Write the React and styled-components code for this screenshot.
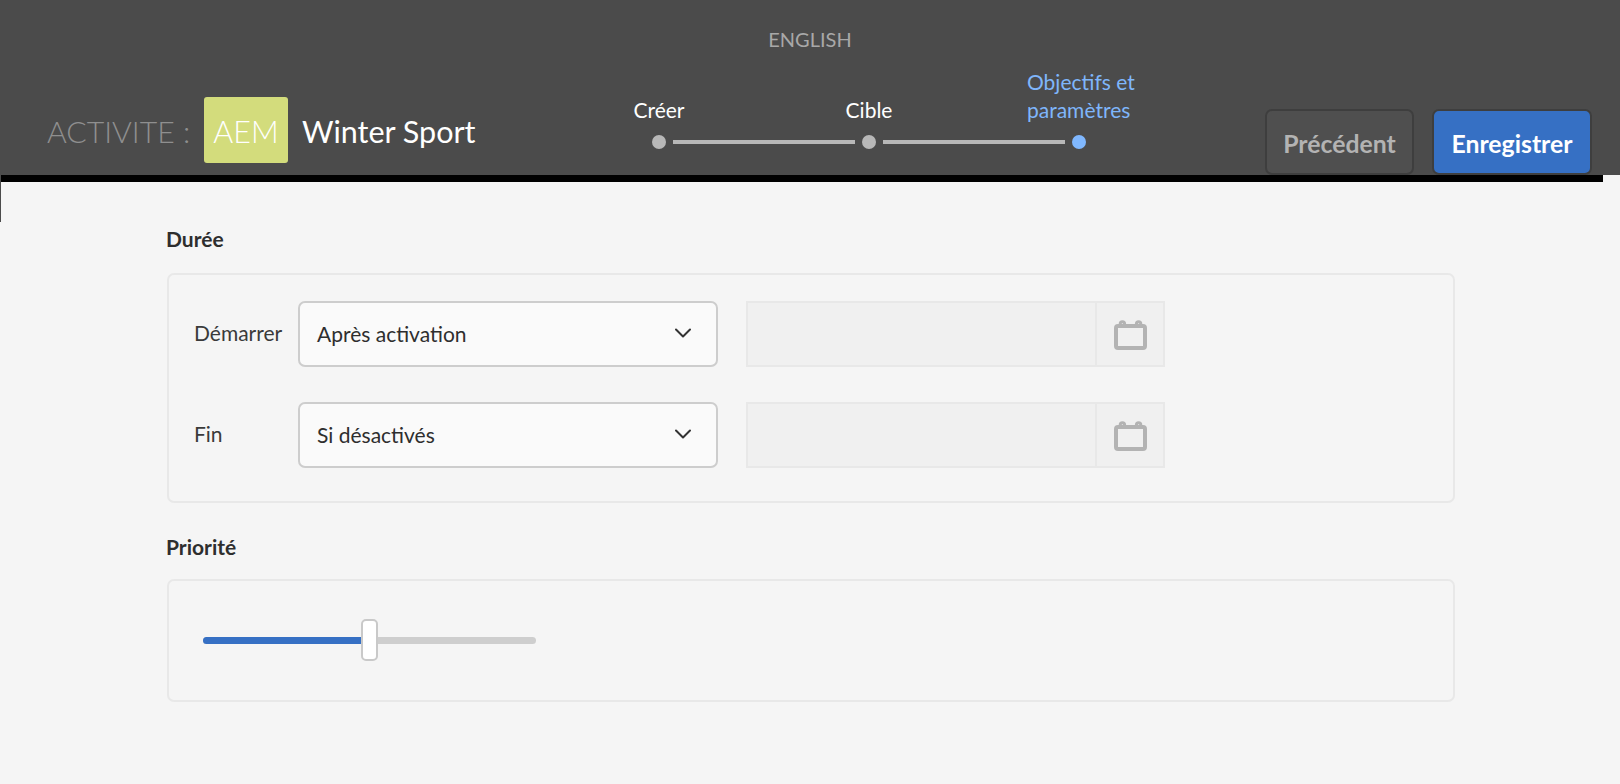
import React from "react";
import styled, { createGlobalStyle } from "styled-components";

const Global = createGlobalStyle`
  html, body { margin: 0; padding: 0; background: #f5f5f5; }
  body { font-family: "Lato", "Noto Sans", sans-serif; color: #2e2e2e; }
  * { box-sizing: border-box; }
`;

const Page = styled.div`
  position: relative;
  width: 1620px;
  height: 784px;
  overflow: hidden;
  background: #f5f5f5;
`;

const Header = styled.header`
  height: 175px;
  background: #4b4b4b;
`;

const LanguageRow = styled.div`
  height: 65px;
  padding-top: 26px;
  text-align: center;
  font-size: 20px;
  line-height: 26px;
  color: #a8a8a8;
`;

const MainRow = styled.div`
  display: flex;
  align-items: flex-start;
  padding: 0 28px 0 47px;
`;

const Title = styled.div`
  display: flex;
  align-items: center;
  width: 507px;
  margin-top: 32px;
  height: 66px;
`;

const ActivityLabel = styled.span`
  width: 157px;
  padding-top: 2px;
  font-size: 30.2px;
  font-weight: 300;
  color: #8f8f8f;
  white-space: nowrap;
`;

const Badge = styled.span`
  display: flex;
  align-items: center;
  justify-content: center;
  width: 84px;
  height: 66px;
  padding-top: 2px;
  border-radius: 3px;
  background: #d3dc7c;
  color: #fff;
  font-size: 30.5px;
  font-weight: 300;
`;

const ActivityName = styled.span`
  margin-left: 14px;
  padding-top: 2px;
  font-size: 30.5px;
  font-weight: 400;
  color: #fff;
  white-space: nowrap;
`;

const Stepper = styled.nav`
  width: 630px;
  margin-top: 3px;
`;

const StepLabels = styled.div`
  display: grid;
  grid-template-columns: repeat(3, 210px);
  align-items: end;
  justify-items: center;
  height: 56px;
  margin-bottom: 11px;
`;

const StepLabel = styled.span`
  width: ${(p) => (p.$active ? "106px" : "auto")};
  margin-left: ${(p) => (p.$active ? "2px" : "0")};
  font-size: 21px;
  line-height: 28px;
  white-space: nowrap;
  color: ${(p) => (p.$active ? "#7fb6fb" : "#fff")};
`;

const StepTrack = styled.div`
  display: flex;
  align-items: center;
  gap: 7px;
  width: 434px;
  margin-left: 98px;
`;

const StepDot = styled.span`
  flex: none;
  width: 14px;
  height: 14px;
  border-radius: 50%;
  background: ${(p) => (p.$active ? "#80b8ff" : "#b8b8b8")};
`;

const StepLine = styled.span`
  flex: 1;
  height: 4px;
  background: #b8b8b8;
`;

const Actions = styled.div`
  display: flex;
  gap: 18px;
  margin: 44px 0 0 auto;
`;

const ActionButton = styled.button`
  height: 66px;
  width: ${(p) => (p.$primary ? "160px" : "149px")};
  padding: 3px 0 0;
  border: 2px solid #3e3e3e;
  border-radius: 7px;
  background: ${(p) => (p.$primary ? "#3670c4" : "#4f4f4f")};
  color: ${(p) => (p.$primary ? "#fff" : "#b3b3b3")};
  font-family: inherit;
  font-size: 24.8px;
  font-weight: 700;
`;

const BlackBar = styled.div`
  width: 1602px;
  height: 7px;
  margin-left: 1px;
  background: #000;
`;

const EdgeSliver = styled.div`
  position: absolute;
  left: 0;
  top: 175px;
  width: 1px;
  height: 47px;
  background: #4b4b4b;
`;

const Main = styled.main`
  width: 1455px;
  padding: 45px 0 0 167px;
`;

const SectionTitle = styled.h2`
  margin: ${(p) => (p.$first ? "0 0 22px -1px" : "32px 0 20px -1px")};
  font-size: 21px;
  line-height: 24px;
  font-weight: 700;
  color: #2e2e2e;
`;

const Panel = styled.section`
  border: 2px solid #e8e8e8;
  border-radius: 7px;
`;

const DurationPanel = styled(Panel)`
  display: grid;
  gap: 35px;
  height: 230px;
  padding: 26px 25px 0;
  align-content: start;
`;

const FieldRow = styled.div`
  display: flex;
  align-items: center;
  height: 66px;
`;

const FieldLabel = styled.label`
  width: 104px;
  padding-bottom: 3px;
  font-size: 21px;
  color: #3a3a3a;
`;

const Select = styled.div`
  display: flex;
  align-items: center;
  justify-content: space-between;
  width: 420px;
  height: 66px;
  padding: 0 25px 2px 17px;
  border: 2px solid #cdcdcd;
  border-radius: 7px;
  background: #fafafa;
  font-size: 21px;
  color: #2e2e2e;
`;

const DateField = styled.div`
  display: flex;
  width: 419px;
  height: 66px;
  margin-left: 28px;
  border: 2px solid #e8e8e8;
  background: #f0f0f0;
`;

const DateInput = styled.div`
  flex: 1;
`;

const DateButton = styled.div`
  display: flex;
  align-items: center;
  justify-content: center;
  width: 68px;
  padding: 1px 0 0;
  border-left: 2px solid #e8e8e8;
`;

const PriorityPanel = styled(Panel)`
  height: 123px;
  padding: 38px 0 0 34px;
`;

const Slider = styled.div`
  position: relative;
  width: 333px;
  height: 42px;
  display: flex;
  align-items: center;
`;

const SliderTrack = styled.div`
  width: 100%;
  height: 7px;
  border-radius: 4px;
  background: #cecece;
  overflow: hidden;
`;

const SliderFill = styled.div`
  height: 100%;
  background: #3670c4;
`;

const SliderThumb = styled.div`
  position: absolute;
  top: 0;
  width: 17px;
  height: 42px;
  margin-left: -1px;
  border: 2px solid #c9c9c9;
  border-radius: 5px;
  background: #fff;
`;

const Chevron = () => (
  <svg width="16" height="10" viewBox="0 0 16 10" fill="none">
    <path d="M1 1.5l7 7 7-7" stroke="#333" strokeWidth="2" strokeLinecap="round" strokeLinejoin="round" />
  </svg>
);

const CalendarIcon = () => (
  <svg width="33" height="30" viewBox="0 0 33 30" fill="none">
    <rect x="2" y="6" width="29" height="22" rx="2" stroke="#b3b3b3" strokeWidth="4" />
    <path d="M6.2 6V4a2.2 2.2 0 0 1 4.4 0v2M22.4 6V4a2.2 2.2 0 0 1 4.4 0v2" stroke="#b3b3b3" strokeWidth="3" />
  </svg>
);

const DurationRow = ({ label, value }) => (
  <FieldRow>
    <FieldLabel>{label}</FieldLabel>
    <Select>
      {value}
      <Chevron />
    </Select>
    <DateField>
      <DateInput />
      <DateButton>
        <CalendarIcon />
      </DateButton>
    </DateField>
  </FieldRow>
);

export default function App() {
  const sliderPercent = 159 / 333;
  return (
    <Page>
      <Global />
      <Header>
        <LanguageRow>ENGLISH</LanguageRow>
        <MainRow>
          <Title>
            <ActivityLabel>ACTIVITE :</ActivityLabel>
            <Badge>AEM</Badge>
            <ActivityName>Winter Sport</ActivityName>
          </Title>
          <Stepper>
            <StepLabels>
              <StepLabel>Créer</StepLabel>
              <StepLabel>Cible</StepLabel>
              <StepLabel $active>
                Objectifs et
                <br />
                paramètres
              </StepLabel>
            </StepLabels>
            <StepTrack>
              <StepDot />
              <StepLine />
              <StepDot />
              <StepLine />
              <StepDot $active />
            </StepTrack>
          </Stepper>
          <Actions>
            <ActionButton>Précédent</ActionButton>
            <ActionButton $primary>Enregistrer</ActionButton>
          </Actions>
        </MainRow>
      </Header>
      <BlackBar />
      <EdgeSliver />
      <Main>
        <SectionTitle $first>Durée</SectionTitle>
        <DurationPanel>
          <DurationRow label="Démarrer" value="Après activation" />
          <DurationRow label="Fin" value="Si désactivés" />
        </DurationPanel>
        <SectionTitle>Priorité</SectionTitle>
        <PriorityPanel>
          <Slider>
            <SliderTrack>
              <SliderFill style={{ width: `${sliderPercent * 100}%` }} />
            </SliderTrack>
            <SliderThumb style={{ left: `${sliderPercent * 100}%` }} />
          </Slider>
        </PriorityPanel>
      </Main>
    </Page>
  );
}
